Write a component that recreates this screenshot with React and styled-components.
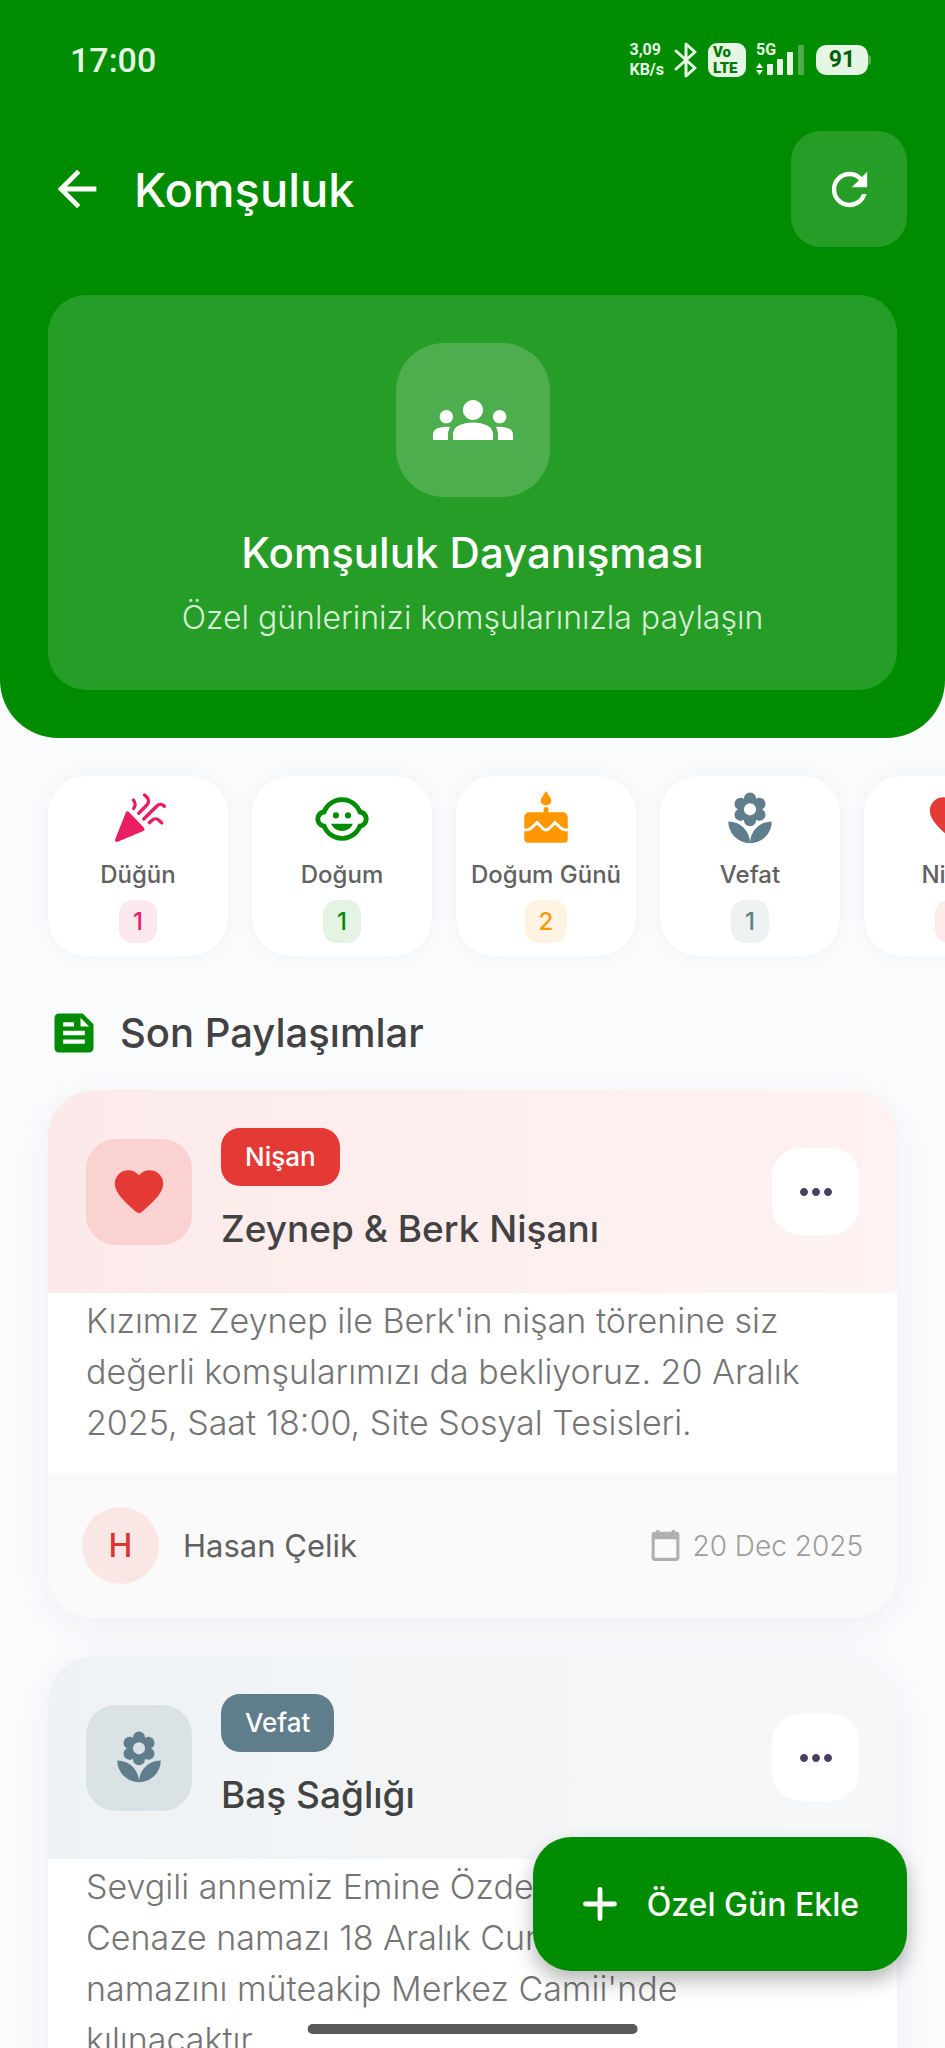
import React from "react";
import styled, { createGlobalStyle } from "styled-components";
import {
  MdArrowBack,
  MdChildCare,
  MdFeed,
  MdGroups,
  MdLocalFlorist,
  MdMoreHoriz,
  MdRefresh,
} from "react-icons/md";

const CelebrationIcon = ({ size }) => (
  <svg width={size} height={size} viewBox="0 0 24 24" aria-hidden="true">
    <path
      d="M3.3 20.7L7.7 9.6l6.2 6.6z"
      fill="currentColor"
      stroke="currentColor"
      strokeWidth="1.6"
      strokeLinejoin="round"
    />
    <path
      d="M10.1 4.2c.9 1 .9 2.5.1 3.4M12.3 9.6l3.4-3.4c.9-.9.9-2.3 0-3.2l-1-.9M14.4 12l5.3-5.3c.9-.9 2.3-.9 3.2 0M16.7 13.5l1-.9c.9-.9 2.2-.9 3.1 0l1 1"
      fill="none"
      stroke="currentColor"
      strokeWidth="1.4"
      strokeLinecap="round"
    />
  </svg>
);

const CakeIcon = ({ size }) => (
  <svg width={size} height={size} viewBox="0 0 24 24" aria-hidden="true">
    <path
      d="M12 .4l1.6 2.5c.4.6.6 1 .6 1.4a2.2 2.1 0 0 1-4.4 0c0-.4.2-.8.6-1.4z"
      fill="currentColor"
    />
    <path d="M11 9.6V8a1 1 0 0 1 2 0v1.6z" fill="currentColor" />
    <path
      d="M5 9.2h14a2 2 0 0 1 2 2v9.1a1.5 1.5 0 0 1-1.5 1.5h-15a1.5 1.5 0 0 1-1.5-1.5v-9.1a2 2 0 0 1 2-2z"
      fill="currentColor"
    />
    <path
      d="M2.5 16.5h1.5c1 0 1.5-.4 2-.9l2.3-2.1 2.4 2.4c.8.8 1.8.8 2.6 0l2.4-2.4 2.3 2.1c.5.5 1 .9 2 .9h1.5"
      fill="none"
      stroke="#fff"
      strokeWidth="1.2"
    />
  </svg>
);

const HeartIcon = ({ size }) => (
  <svg width={size} height={size} viewBox="0 0 24 24" aria-hidden="true">
    <path
      d="M13.35 20.13c-.76.69-1.93.69-2.69-.01l-.11-.1C5.3 15.27 1.87 12.16 2 8.28c.06-1.7.93-3.33 2.34-4.29 2.64-1.8 5.9-.96 7.66 1.1 1.76-2.06 5.02-2.91 7.66-1.1 1.41.96 2.28 2.59 2.34 4.29.14 3.88-3.3 6.99-8.55 11.76l-.1.09z"
      fill="currentColor"
    />
  </svg>
);

const PlusIcon = ({ size }) => (
  <svg width={size} height={size} viewBox="0 0 24 24" aria-hidden="true">
    <path
      d="M12 6v12M6 12h12"
      stroke="currentColor"
      strokeWidth="2"
      strokeLinecap="round"
    />
  </svg>
);

const CalendarIcon = ({ size }) => (
  <svg width={size} height={size} viewBox="0 0 24 24" aria-hidden="true">
    <rect
      x="4"
      y="4"
      width="16"
      height="17"
      rx="1"
      fill="none"
      stroke="currentColor"
      strokeWidth="2"
    />
    <path d="M4 4h16v4H4zM6 2h2v3H6zM16 2h2v3h-2z" fill="currentColor" />
  </svg>
);

const BluetoothIcon = () => (
  <svg width="24" height="36" viewBox="0 0 24 36" aria-hidden="true">
    <path
      d="M2 9l19 17-9 8V2l9 8L2 27"
      fill="none"
      stroke="currentColor"
      strokeWidth="3"
      strokeLinejoin="round"
      strokeLinecap="round"
    />
  </svg>
);

const SignalBars = () => (
  <svg width="42" height="30" viewBox="0 0 42 30" aria-hidden="true">
    <path d="M0 23l3.500-5L7 23zM0 25l3.500 5L7 25z" fill="currentColor" />
    <rect x="11" y="19" width="6" height="11" rx="1" fill="currentColor" />
    <rect x="21" y="14" width="6" height="16" rx="1" fill="currentColor" />
    <rect x="31" y="7" width="6" height="23" rx="1" fill="currentColor" />
  </svg>
);

const categories = [
  { label: "Düğün", count: 1, color: "#e91e63", tint: "#fce8ef", Icon: CelebrationIcon },
  { label: "Doğum", count: 1, color: "#008c00", tint: "#e5f3e5", Icon: MdChildCare },
  { label: "Doğum Günü", count: 2, color: "#ff9800", tint: "#fff4e3", Icon: CakeIcon },
  { label: "Vefat", count: 1, color: "#607d8b", tint: "#eff2f3", Icon: MdLocalFlorist },
  { label: "Nişan", count: 1, color: "#e53935", tint: "#fcebea", Icon: HeartIcon },
];

const posts = [
  {
    tag: "Nişan",
    title: "Zeynep & Berk Nişanı",
    lines: [
      "Kızımız Zeynep ile Berk'in nişan törenine siz",
      "değerli komşularımızı da bekliyoruz. 20 Aralık",
      "2025, Saat 18:00, Site Sosyal Tesisleri.",
    ],
    author: "Hasan Çelik",
    date: "20 Dec 2025",
    color: "#e53935",
    from: "#fceaea",
    to: "#fef3f2",
    box: "#f9d2d1",
    Icon: HeartIcon,
  },
  {
    tag: "Vefat",
    title: "Baş Sağlığı",
    lines: [
      "Sevgili annemiz Emine Özdemir",
      "Cenaze namazı 18 Aralık Cuma",
      "namazını müteakip Merkez Camii'nde",
      "kılınacaktır.",
    ],
    author: "Özdemir",
    date: "18 Dec 2025",
    color: "#607d8b",
    from: "#eff2f4",
    to: "#f7f8fa",
    box: "#dae2e5",
    Icon: MdLocalFlorist,
  },
];

const App = () => {
  return (
    <Screen>
      <GlobalStyle />
      <Header>
        <StatusBar>
          <Clock>17:00</Clock>
          <StatusIcons>
            <NetSpeed>
              <span>3,09</span>
              <span>KB/s</span>
            </NetSpeed>
            <BluetoothIcon />
            <VoLte>
              <span>Vo</span>
              <span>LTE</span>
            </VoLte>
            <Signal>
              <SignalBars />
              <LastBar />
              <Network>5G</Network>
            </Signal>
            <Battery>91</Battery>
          </StatusIcons>
        </StatusBar>
        <AppBar>
          <BackButton type="button" aria-label="Geri">
            <MdArrowBack size={58} />
          </BackButton>
          <AppTitle>Komşuluk</AppTitle>
          <RefreshButton type="button" aria-label="Yenile">
            <MdRefresh size={53} />
          </RefreshButton>
        </AppBar>
        <Hero>
          <HeroIcon>
            <MdGroups size={80} />
          </HeroIcon>
          <HeroTitle>Komşuluk Dayanışması</HeroTitle>
          <HeroText>Özel günlerinizi komşularınızla paylaşın</HeroText>
        </Hero>
      </Header>
      <Categories>
        {categories.map(({ label, count, color, tint, Icon }) => (
          <Category key={label} type="button">
            <CategoryIcon $color={color}>
              <Icon size={58} />
            </CategoryIcon>
            <CategoryLabel>{label}</CategoryLabel>
            <Count $color={color} $tint={tint}>
              {count}
            </Count>
          </Category>
        ))}
      </Categories>
      <SectionTitle>
        <MdFeed size={52} color="#008c00" />
        <h2>Son Paylaşımlar</h2>
      </SectionTitle>
      <Feed>
        {posts.map(({ Icon, ...post }) => (
          <Card key={post.title}>
            <CardHeader $from={post.from} $to={post.to}>
              <CardIcon $color={post.color} $tint={post.box}>
                <Icon size={58} />
              </CardIcon>
              <CardHeading>
                <Tag $color={post.color}>{post.tag}</Tag>
                <CardTitle>{post.title}</CardTitle>
              </CardHeading>
              <MenuButton type="button" aria-label="Seçenekler">
                <MdMoreHoriz size={48} />
              </MenuButton>
            </CardHeader>
            <CardText>
              {post.lines.map((line) => (
                <React.Fragment key={line}>
                  {line}
                  <br />
                </React.Fragment>
              ))}
            </CardText>
            <CardFooter>
              <Avatar>{post.author[0]}</Avatar>
              <Author>{post.author}</Author>
              <PostDate>
                <CalendarIcon size={37} />
                {post.date}
              </PostDate>
            </CardFooter>
          </Card>
        ))}
      </Feed>
      <AddButton type="button">
        <PlusIcon size={58} />
        Özel Gün Ekle
      </AddButton>
      <HomeIndicator />
    </Screen>
  );
};

export default App;

const GlobalStyle = createGlobalStyle`
  * {
    box-sizing: border-box;
  }
  body {
    margin: 0;
    background: #fafbfd;
    font-family: Inter, "Noto Sans", sans-serif;
  }
  h1, h2, h3, p {
    margin: 0;
  }
  button {
    border: 0;
    padding: 0;
    font-family: inherit;
    cursor: pointer;
  }
  svg {
    display: block;
    flex-shrink: 0;
  }
`;

const Screen = styled.div`
  position: relative;
  height: 100vh;
  overflow: hidden;
`;

const Header = styled.header`
  padding: 0 48px 48px;
  border-radius: 0 0 58px 58px;
  background: #008c00;
  color: #fff;
`;
const StatusBar = styled.div`
  display: flex;
  align-items: center;
  justify-content: space-between;
  height: 119px;
  padding: 0 29px 0 22px;
  color: #e6f6e4;
  font-family: Roboto, sans-serif;
`;
const Clock = styled.span`
  font-size: 34px;
  font-weight: 500;
`;
const StatusIcons = styled.div`
  display: flex;
  align-items: center;
  gap: 10px;
`;
const NetSpeed = styled.div`
  display: flex;
  flex-direction: column;
  font-size: 16px;
  font-weight: 700;
  line-height: 20px;
`;
const VoLte = styled.div`
  display: flex;
  flex-direction: column;
  width: 38px;
  height: 34px;
  padding: 1px 5px;
  border-radius: 9px;
  background: #e6f6e4;
  color: #007a00;
  font-size: 15px;
  font-weight: 900;
  line-height: 16px;
`;
const Signal = styled.div`
  position: relative;
  display: flex;
  align-items: flex-end;
`;
const LastBar = styled.span`
  flex-shrink: 0;
  width: 6px;
  height: 30px;
  border-radius: 1px;
  background: #4dad4b;
`;
const Network = styled.span`
  position: absolute;
  top: -3px;
  left: 0;
  font-size: 16px;
  font-weight: 700;
  line-height: 16px;
`;
const Battery = styled.div`
  position: relative;
  width: 52px;
  height: 30px;
  margin-left: 2px;
  border-radius: 10px;
  background: #e6f6e4;
  color: #00600a;
  font-size: 23px;
  font-weight: 700;
  line-height: 30px;
  text-align: center;

  &::after {
    content: "";
    position: absolute;
    top: 10px;
    right: -3px;
    width: 3px;
    height: 10px;
    border-radius: 0 3px 3px 0;
    background: #4dad4b;
  }
`;

const AppBar = styled.div`
  display: flex;
  align-items: center;
  height: 140px;
  margin-right: -10px;
`;
const BackButton = styled.button`
  background: none;
  color: inherit;
`;
const AppTitle = styled.h1`
  flex: 1;
  margin-left: 28px;
  font-size: 47px;
  font-weight: 500;
`;
const RefreshButton = styled.button`
  display: grid;
  place-items: center;
  width: 116px;
  height: 116px;
  border-radius: 30px;
  background: rgba(255, 255, 255, 0.15);
  color: inherit;
`;

const Hero = styled.section`
  display: flex;
  flex-direction: column;
  align-items: center;
  margin-top: 36px;
  padding: 48px;
  border-radius: 38px;
  background: rgba(255, 255, 255, 0.15);
`;
const HeroIcon = styled.div`
  display: grid;
  place-items: center;
  width: 154px;
  height: 154px;
  margin-bottom: 24px;
  border-radius: 48px;
  background: rgba(255, 255, 255, 0.18);
`;
const HeroTitle = styled.h2`
  font-size: 42px;
  font-weight: 500;
  line-height: 63px;
`;
const HeroText = styled.p`
  margin-top: 10px;
  color: #d8f0d7;
  font-size: 32px;
  font-weight: 300;
  line-height: 48px;
`;

const Categories = styled.nav`
  display: flex;
  gap: 24px;
  padding: 38px 48px;
  overflow: hidden;
`;
const Category = styled.button`
  display: flex;
  flex: none;
  flex-direction: column;
  align-items: center;
  justify-content: center;
  width: 180px;
  height: 180px;
  border-radius: 38px;
  background: #fff;
  box-shadow: 0 0 20px rgba(40, 60, 80, 0.04);
`;
const CategoryIcon = styled.span`
  color: ${({ $color }) => $color};
`;
const CategoryLabel = styled.span`
  margin: 10px 0 8px;
  color: #616161;
  font-size: 24px;
  font-weight: 500;
  line-height: 34px;
`;
const Count = styled.span`
  padding: 0 14px;
  border-radius: 14px;
  background: ${({ $tint }) => $tint};
  color: ${({ $color }) => $color};
  font-size: 24px;
  font-weight: 500;
  line-height: 43px;
`;

const SectionTitle = styled.div`
  display: flex;
  align-items: center;
  gap: 20px;
  padding: 12px 48px 30px;
  color: #424242;

  h2 {
    font-size: 40px;
    font-weight: 500;
    line-height: 54px;
  }
`;

const Feed = styled.main`
  display: flex;
  flex-direction: column;
  gap: 38px;
  padding: 0 48px;
`;
const Card = styled.article`
  overflow: hidden;
  border-radius: 46px;
  background: #fff;
  box-shadow: 0 10px 36px rgba(40, 60, 80, 0.06);
`;
const CardHeader = styled.header`
  display: flex;
  align-items: center;
  padding: 38px;
  background: linear-gradient(
    to right,
    ${({ $from }) => $from},
    ${({ $to }) => $to}
  );
`;
const CardIcon = styled.div`
  display: grid;
  place-items: center;
  width: 106px;
  height: 106px;
  border-radius: 30px;
  background: ${({ $tint }) => $tint};
  color: ${({ $color }) => $color};
`;
const CardHeading = styled.div`
  flex: 1;
  margin-left: 29px;
`;
const Tag = styled.span`
  display: inline-block;
  padding: 0 24px;
  border-radius: 19px;
  background: ${({ $color }) => $color};
  color: #fff;
  font-size: 26px;
  font-weight: 500;
  line-height: 58px;
`;
const CardTitle = styled.h3`
  margin-top: 16px;
  color: #424242;
  font-size: 37px;
  font-weight: 500;
  line-height: 53px;
`;
const MenuButton = styled.button`
  display: grid;
  place-items: center;
  width: 87px;
  height: 87px;
  border-radius: 28px;
  background: #fff;
  color: #49405f;
`;
const CardText = styled.p`
  padding: 2px 38px 25px;
  color: #757575;
  font-size: 34px;
  font-weight: 300;
  line-height: 51px;
  white-space: nowrap;
`;
const CardFooter = styled.footer`
  display: flex;
  align-items: center;
  padding: 34px;
  background: #fafafa;
`;
const Avatar = styled.div`
  display: grid;
  place-items: center;
  width: 77px;
  height: 77px;
  border-radius: 50%;
  background: #fbe6e6;
  color: #d9362f;
  font-size: 32px;
  font-weight: 500;
`;
const Author = styled.span`
  flex: 1;
  margin-left: 24px;
  color: #616161;
  font-size: 31px;
`;
const PostDate = styled.span`
  display: flex;
  align-items: center;
  gap: 8px;
  color: #9e9e9e;
  font-size: 28px;
  font-weight: 300;

  svg {
    color: #b0b0b0;
  }
`;

const AddButton = styled.button`
  position: absolute;
  right: 38px;
  bottom: 77px;
  display: flex;
  align-items: center;
  gap: 18px;
  height: 134px;
  padding: 0 48px 0 38px;
  border-radius: 38px;
  background: #008c00;
  box-shadow: 0 10px 20px rgba(0, 0, 0, 0.28);
  color: #fff;
  font-size: 32px;
  font-weight: 500;
`;
const HomeIndicator = styled.div`
  position: absolute;
  bottom: 14px;
  left: 50%;
  width: 35%;
  height: 10px;
  border-radius: 5px;
  background: #595959;
  transform: translateX(-50%);
`;
